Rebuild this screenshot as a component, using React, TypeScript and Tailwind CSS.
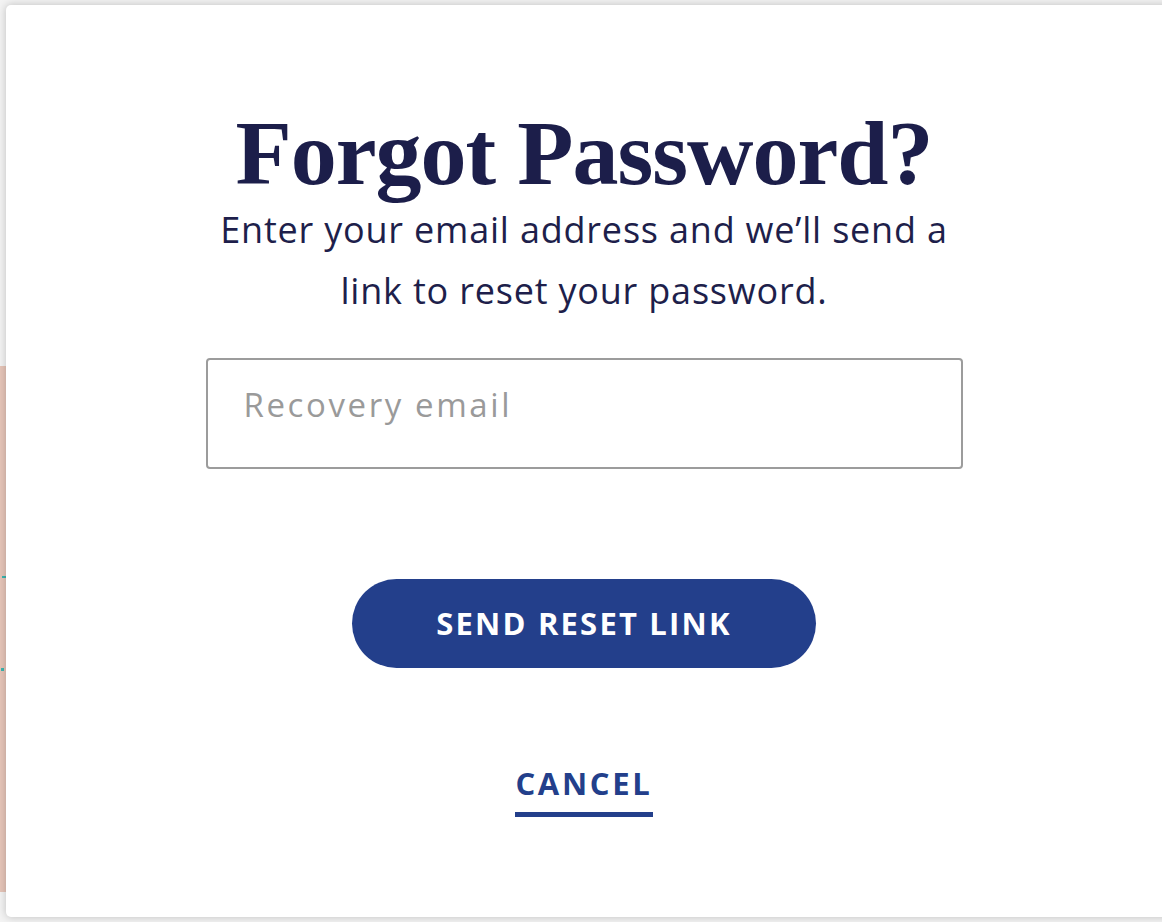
import React from "react";

export default function App() {
  return (
    <div className="relative w-[1162px] h-[922px] overflow-hidden bg-[#f3f3f3]">
      {/* background page content peeking from behind overlay */}
      <div className="absolute left-0 top-[366px] w-[20px] h-[526px] bg-[#e6c5b8]">
        <div className="absolute left-[2px] top-[210px] w-[4px] h-[2px] bg-[#3bb5b0]" />
        <div className="absolute left-[1px] top-[302px] w-[3px] h-[3px] bg-[#3bb5b0]" />
      </div>
      <div className="absolute left-[6px] top-[5px] w-[1180px] h-[912px] rounded-[5px] bg-white shadow-[0_0_8px_rgba(0,0,0,0.22)] flex flex-col items-center pr-[24px]">
        <h1
          className="mt-[102px] text-[#1c1e4a] font-bold leading-none tracking-[-1px] text-[92px]"
          style={{ fontFamily: '"Liberation Serif", "Times New Roman", serif' }}
        >
          Forgot Password?
        </h1>
        <p
          className="mt-0 text-center text-[#1e1f4b] text-[36px] leading-[61px] tracking-[0.8px] w-[800px]"
          style={{ fontFamily: '"Open Sans", Lato, sans-serif' }}
        >
          Enter your email address and we’ll send a
          <br />
          link to reset your password.
        </p>
        <div className="mt-[37px] w-[757px] h-[111px] rounded-[4px] border-2 border-[#9c9c9c] flex items-start pt-[28px] pl-[36px]">
          <span
            className="text-[33px] leading-none tracking-[2.6px] text-[#9a9a9a]"
            style={{ fontFamily: '"Open Sans", Lato, sans-serif' }}
          >
            Recovery email
          </span>
        </div>
        <button
          className="mt-[110px] w-[464px] h-[89px] rounded-full bg-[#233f8b] text-white font-bold text-[31px] tracking-[2.2px]"
          style={{ fontFamily: '"Open Sans", Lato, sans-serif' }}
        >
          SEND RESET LINK
        </button>
        <div
          className="mt-[100px] text-[#233f8b] font-bold text-[31px] tracking-[2.7px] leading-none border-b-[5px] border-[#233f8b] pb-[13px]"
          style={{ fontFamily: '"Open Sans", Lato, sans-serif' }}
        >
          CANCEL
        </div>
      </div>
    </div>
  );
}
